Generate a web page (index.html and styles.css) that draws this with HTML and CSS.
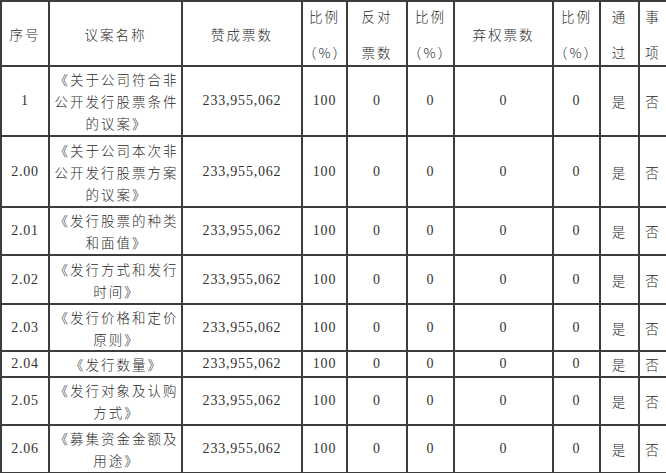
FILE: index.html
```html
<!DOCTYPE html>
<html lang="zh">
<head>
<meta charset="utf-8">
<link rel="stylesheet" href="styles.css">
</head>
<body>
<table class="vote">
  <colgroup>
    <col class="c1"><col class="c2"><col class="c3"><col class="c4"><col class="c5">
    <col class="c6"><col class="c7"><col class="c8"><col class="c9"><col class="c10">
  </colgroup>
  <tr class="head">
    <td class="cjk">序号</td>
    <td class="cjk">议案名称</td>
    <td class="cjk">赞成票数</td>
    <td class="cjk two"><span class="l1">比例</span><span class="l2">（%）</span></td>
    <td class="cjk two"><span class="l1">反对</span><span class="l2">票数</span></td>
    <td class="cjk two"><span class="l1">比例</span><span class="l2">（%）</span></td>
    <td class="cjk">弃权票数</td>
    <td class="cjk two"><span class="l1">比例</span><span class="l2">（%）</span></td>
    <td class="cjk two"><span class="l1">通</span><span class="l2">过</span></td>
    <td class="cjk two"><span class="l1">事</span><span class="l2">项</span></td>
  </tr>
  <tr class="h70">
    <td>1</td>
    <td class="cjk name">《关于公司符合非<br>公开发行股票条件<br>的议案》</td>
    <td>233,955,062</td><td>100</td><td>0</td><td>0</td><td>0</td><td>0</td>
    <td class="cjk">是</td><td class="cjk">否</td>
  </tr>
  <tr class="h71">
    <td>2.00</td>
    <td class="cjk name">《关于公司本次非<br>公开发行股票方案<br>的议案》</td>
    <td>233,955,062</td><td>100</td><td>0</td><td>0</td><td>0</td><td>0</td>
    <td class="cjk">是</td><td class="cjk">否</td>
  </tr>
  <tr class="h48">
    <td>2.01</td>
    <td class="cjk name">《发行股票的种类<br>和面值》</td>
    <td>233,955,062</td><td>100</td><td>0</td><td>0</td><td>0</td><td>0</td>
    <td class="cjk">是</td><td class="cjk">否</td>
  </tr>
  <tr class="h49">
    <td>2.02</td>
    <td class="cjk name">《发行方式和发行<br>时间》</td>
    <td>233,955,062</td><td>100</td><td>0</td><td>0</td><td>0</td><td>0</td>
    <td class="cjk">是</td><td class="cjk">否</td>
  </tr>
  <tr class="h47">
    <td>2.03</td>
    <td class="cjk name">《发行价格和定价<br>原则》</td>
    <td>233,955,062</td><td>100</td><td>0</td><td>0</td><td>0</td><td>0</td>
    <td class="cjk">是</td><td class="cjk">否</td>
  </tr>
  <tr class="h26">
    <td>2.04</td>
    <td class="cjk name">《发行数量》</td>
    <td>233,955,062</td><td>100</td><td>0</td><td>0</td><td>0</td><td>0</td>
    <td class="cjk">是</td><td class="cjk">否</td>
  </tr>
  <tr class="h48">
    <td>2.05</td>
    <td class="cjk name">《发行对象及认购<br>方式》</td>
    <td>233,955,062</td><td>100</td><td>0</td><td>0</td><td>0</td><td>0</td>
    <td class="cjk">是</td><td class="cjk">否</td>
  </tr>
  <tr class="h48">
    <td>2.06</td>
    <td class="cjk name">《募集资金金额及<br>用途》</td>
    <td>233,955,062</td><td>100</td><td>0</td><td>0</td><td>0</td><td>0</td>
    <td class="cjk">是</td><td class="cjk">否</td>
  </tr>
</table>
</body>
</html>
```

FILE: styles.css
```css
html, body {
  margin: 0;
  padding: 0;
  background: #ffffff;
}

.vote {
  border-collapse: collapse;
  table-layout: fixed;
  width: 666px;
  font-family: "Liberation Serif", "Noto Sans CJK SC", serif;
  font-size: 14px;
  color: #333;
}

.c1 { width: 48px; }
.c2 { width: 133px; }
.c3 { width: 120px; }
.c4 { width: 45px; }
.c5 { width: 60px; }
.c6 { width: 47px; }
.c7 { width: 99px; }
.c8 { width: 47px; }
.c9 { width: 39px; }
.c10 { width: 28px; }

.vote td {
  border: 2px solid #3c3c3c;
  padding: 0;
  text-align: center;
  vertical-align: middle;
  line-height: 22px;
  letter-spacing: 0.8px;
  white-space: nowrap;
  overflow: hidden;
}

.vote td.cjk {
  font-family: "Noto Sans CJK SC", sans-serif;
  font-size: 13.5px;
  font-weight: 300;
  letter-spacing: 2px;
  color: #2a2a2a;
}

.vote td.name {
  letter-spacing: 2px;
  padding-left: 2px;
}

.head { height: 65px; }

.head td.two .l1,
.head td.two .l2 {
  display: block;
  line-height: 20px;
}

.head td.two .l2 {
  margin-top: 16px;
}

.h70 { height: 70px; }
.h71 { height: 71px; }
.h48 { height: 48px; }
.h49 { height: 49px; }
.h47 { height: 47px; }
.h26 { height: 26px; }
```
